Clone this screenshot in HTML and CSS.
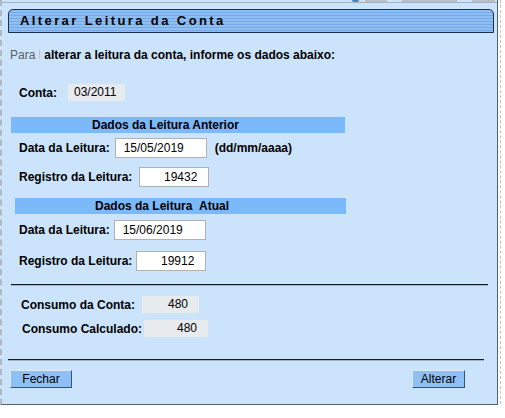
FILE: index.html
```html
<!DOCTYPE html>
<html lang="pt-BR">
<head>
    <meta charset="UTF-8">
    <title>Alterar Leitura da Conta</title>
    <link rel="stylesheet" href="styles.css">
</head>
<body>
<div class="janela">
    <div class="tela">
        <div class="topo">
            <i class="bola"></i><i class="traco t1"></i>
            <i class="traco t2"></i>
            <i class="traco t3"></i>
        </div>

        <div class="titulo">Alterar Leitura da Conta</div>

        <p class="aviso"><span class="para">Para</span><span class="sep"></span>alterar a leitura da conta, informe os dados abaixo:</p>

        <div class="linha conta">
            <label>Conta:</label>
            <span class="cinza mes">03/2011</span>
        </div>

        <div class="faixa anterior">Dados da Leitura Anterior</div>
        <div class="linha r1">
            <label>Data da Leitura:</label>
            <input class="campo data" type="text" value="15/05/2019">
            <span class="formato">(dd/mm/aaaa)</span>
        </div>
        <div class="linha r2">
            <label>Registro da Leitura:</label>
            <input class="campo registro" type="text" value="19432">
        </div>

        <div class="faixa atual">Dados da Leitura &nbsp;Atual</div>
        <div class="linha r3">
            <label>Data da Leitura:</label>
            <input class="campo data" type="text" value="15/06/2019">
        </div>
        <div class="linha r4">
            <label>Registro da Leitura:</label>
            <input class="campo registro" type="text" value="19912">
        </div>

        <div class="divisor meio"></div>

        <div class="linha c1">
            <label>Consumo da Conta:</label>
            <span class="cinza consumo">480</span>
        </div>
        <div class="linha c2">
            <label>Consumo Calculado:</label>
            <span class="cinza calculado">480</span>
        </div>

        <div class="divisor fim"></div>

        <div class="botoes">
            <button class="botao fechar" type="button">Fechar</button>
            <button class="botao alterar" type="button">Alterar</button>
        </div>
    </div>
    <div class="lateral"></div>
</div>
</body>
</html>
```

FILE: styles.css
```css
*{
    margin:0;
    padding:0;
    box-sizing:border-box;
}
body{
    background:#fff;
    font-family:"Liberation Sans", Arial, sans-serif;
    font-size:12px;
    color:#000;
}
.janela{
    display:flex;
    align-items:flex-start;
}
.tela{
    width:498px;
    background:#cbe3fb;
    border-left:2px dashed #aeb9c4;
    border-right:1px solid #56606c;
    border-bottom:1px solid #56606c;
}
.lateral{
    width:3px;
    height:404px;
    margin-left:2px;
    border-left:1px dashed #b6c4d3;
}

/* pontas do menu de cima, cortado pela janela */
.topo{
    height:3px;
    border-bottom:1px solid #a9b3bd;
    overflow:hidden;
    display:flex;
    justify-content:flex-end;
    align-items:flex-start;
    padding-right:2px;
}
.topo i{
    display:block;
    height:2px;
}
.topo .bola{
    width:7px;
    margin-right:6px;
    border-radius:0 0 4px 4px;
    background:#4a7fc6;
}
.topo .traco{
    background:#b7c0ca;
}
.topo .t1{ width:22px; margin-right:15px; }
.topo .t2{ width:55px; margin-right:15px; }
.topo .t3{ width:23px; }

.titulo{
    height:24px;
    margin:6px 3px 0 6px;
    padding-left:11px;
    border:1px solid #1d2f4f;
    border-radius:5px 5px 0 0;
    background:repeating-linear-gradient(to bottom,#8fbff2 0,#8fbff2 2px,#76aae7 2px,#76aae7 3px);
    font-size:13px;
    font-weight:bold;
    letter-spacing:2.4px;
    line-height:22px;
}

.aviso{
    margin:15px 0 0 8px;
    line-height:14px;
    font-weight:bold;
}
.aviso .para{
    font-weight:normal;
    color:#5f5f5f;
}
.aviso .sep{
    display:inline-block;
    width:1px;
    height:9px;
    margin:0 4px;
    background:#e3b4b4;
}

.linha{
    display:flex;
    align-items:center;
    gap:7px;
    padding-left:17px;
}
.linha label{
    font-weight:bold;
}
.conta{
    margin-top:22px;
    gap:11px;
}
.r1{ margin-top:5px; gap:5px; }
.r2{ margin-top:9px; }
.r3{ margin-top:6px; gap:4px; }
.r4{ margin-top:11px; gap:4px; }
.c1{ margin-top:10px; padding-left:19px; }
.c2{ margin-top:7px; padding-left:20px; gap:2px; }

.cinza{
    display:block;
    height:17px;
    line-height:17px;
    background:#e8ebee;
}
.cinza.mes{
    width:57px;
    padding-left:6px;
}
.cinza.consumo,.cinza.calculado{
    text-align:right;
    padding-right:11px;
}
.cinza.consumo{ width:57px; }
.cinza.calculado{ width:64px; }

.faixa{
    height:16px;
    line-height:16px;
    background:#7bb9fb;
    font-weight:bold;
}
.faixa.anterior{
    width:334px;
    margin:16px 0 0 9px;
    padding-left:81px;
}
.faixa.atual{
    width:331px;
    margin:11px 0 0 13px;
    padding-left:80px;
}

.campo{
    height:20px;
    padding:0 8px;
    border:1px solid #b1b1b1;
    background:#fff;
    font-family:"Liberation Sans", Arial, sans-serif;
    font-size:12px;
    color:#000;
}
.campo.data{ width:92px; }
.campo.registro{
    width:70px;
    text-align:right;
    padding-right:11px;
}
.formato{
    margin-left:3px;
    font-weight:bold;
}

.divisor{
    height:2px;
    border-top:1px solid #141c26;
    border-bottom:1px solid #a3b3c4;
}
.divisor.meio{
    width:477px;
    margin:13px 0 0 9px;
}
.divisor.fim{
    width:476px;
    margin:22px 0 0 6px;
}

.botoes{
    display:flex;
    justify-content:space-between;
    margin:9px 32px 0 8px;
    padding-bottom:16px;
}
.botao{
    height:18px;
    border:1px solid;
    border-color:#d9ecff #34557a #34557a #d9ecff;
    background:#8ec0f6;
    font-family:"Liberation Sans", Arial, sans-serif;
    font-size:12px;
    color:#000;
}
.botao.fechar{ width:62px; }
.botao.alterar{ width:53px; }
```
